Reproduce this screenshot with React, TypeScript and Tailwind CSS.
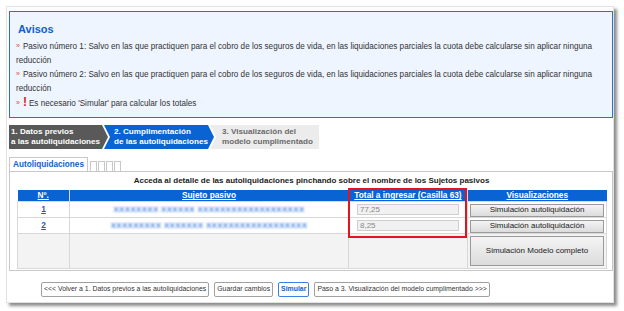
import React from "react";

const font = { fontFamily: '"Liberation Sans", Arial, sans-serif' };

function Bullet() {
  return <span className="inline-block text-[#e0483c] text-[7px] leading-[7px] mr-[3px] align-[1px]">»</span>;
}

const pasivoText =
  "Salvo en las que practiquen para el cobro de los seguros de vida, en las liquidaciones parciales la cuota debe calcularse sin aplicar ninguna";

function Avisos() {
  return (
    <div className="border border-[#2a6fd6] bg-[#eef5ff] pl-[6px] pt-[10px] pb-[6px] text-[8.15px] leading-[14px] text-[#333]">
      <div className="text-[11px] leading-[14px] font-bold text-[#1160c9] pl-[2px] mb-[4px]">Avisos</div>
      {[1, 2].map((n) => (
        <div key={n}>
          <div className="whitespace-nowrap">
            <Bullet />
            <span>Pasivo número {n}: {pasivoText}</span>
          </div>
          <div>reducción</div>
        </div>
      ))}
      <div className="whitespace-nowrap">
        <Bullet />
        <span className="inline-block text-[#e0201c] font-bold text-[12px] leading-[12px] mr-[2px]">!</span>
        <span>Es necesario 'Simular' para calcular los totales</span>
      </div>
    </div>
  );
}

function Steps() {
  return (
    <div className="flex h-[24px] mt-[7px] text-[8.1px] leading-[10px] font-bold">
      <div className="w-[99px] bg-[#595959] text-white pl-[2px] flex flex-col justify-center [clip-path:polygon(0_0,calc(100%_-_6px)_0,100%_50%,calc(100%_-_6px)_100%,0_100%)]">
        <span>1. Datos previos</span>
        <span>a las autoliquidaciones</span>
      </div>
      <div className="w-[110px] -ml-[4px] bg-[#0a63d3] text-white pl-[10px] flex flex-col justify-center [clip-path:polygon(0_0,calc(100%_-_6px)_0,100%_50%,calc(100%_-_6px)_100%,0_100%,6px_50%)]">
        <span>2. Cumplimentación</span>
        <span>de las autoliquidaciones</span>
      </div>
      <div className="w-[109px] -ml-[4px] bg-[#ececec] text-[#6a6a6a] pl-[12px] flex flex-col justify-center [clip-path:polygon(0_0,100%_0,100%_100%,0_100%,6px_50%)]">
        <span>3. Visualización del</span>
        <span>modelo cumplimentado</span>
      </div>
    </div>
  );
}

function Tabs() {
  return (
    <div className="flex items-end mt-[8px] h-[14px]">
      <div className="h-[14px] border border-b-0 border-[#c8c8c8] bg-white px-[3px] text-[8.2px] leading-[13px] font-bold text-[#1160c9]">
        Autoliquidaciones
      </div>
      <div className="flex items-end ml-[2px] gap-[1px]">
        {[0, 1, 2, 3].map((i) => (
          <div key={i} className="w-[7px] h-[10px] border border-b-0 border-[#c8c8c8] bg-white" />
        ))}
      </div>
    </div>
  );
}

function Blurred({ text }: { text: string }) {
  return (
    <span className="text-[#4a86e0] blur-[1px] text-[8px] font-bold tracking-[0.3px] whitespace-nowrap">{text}</span>
  );
}

function SimButton({ label, tall }: { label: string; tall?: boolean }) {
  return (
    <button
      className={
        "w-[134px] border border-[#9a9a9a] bg-gradient-to-b from-[#f4f4f4] to-[#dcdcdc] text-[#222] text-[8px] leading-none " +
        (tall ? "h-[30px]" : "h-[13px]")
      }
    >
      {label}
    </button>
  );
}

function ValueInput({ value }: { value: string }) {
  return (
    <div className="ml-[8px] w-[102px] h-[11px] border border-[#cfcfcf] bg-[#f1f1f1] text-[#888] text-[8px] leading-[9px] pl-[2px]">
      {value}
    </div>
  );
}

function Table() {
  return (
    <div className="relative">
      <table className="w-[589px] table-fixed border-collapse text-[8.3px]">
        <colgroup>
          <col className="w-[52px]" />
          <col className="w-[279px]" />
          <col className="w-[119px]" />
          <col className="w-[139px]" />
        </colgroup>
        <thead>
          <tr className="h-[11px] bg-[#0a63d3] text-white font-bold underline leading-[10px]">
            <th className="border-r border-[#d8d8d8] p-0">Nº.</th>
            <th className="border-r border-[#d8d8d8] p-0">Sujeto pasivo</th>
            <th className="border-r border-[#d8d8d8] p-0">Total a ingresar (Casilla 63)</th>
            <th className="p-0">Visualizaciones</th>
          </tr>
        </thead>
        <tbody>
          <tr className="h-[16px] bg-white">
            <td className="border border-[#d8d8d8] text-center text-[#1160c9] font-bold underline p-0">1</td>
            <td className="border border-[#d8d8d8] text-center p-0">
              <Blurred text="XXXXXXXX XXXXXX XXXXXXXXXXXXXXXXXXX" />
            </td>
            <td className="border border-[#d8d8d8] p-0">
              <ValueInput value="77,25" />
            </td>
            <td className="border border-[#d8d8d8] pl-[2px] p-0 align-bottom">
              <SimButton label="Simulación autoliquidación" />
            </td>
          </tr>
          <tr className="h-[16px] bg-white">
            <td className="border border-[#d8d8d8] text-center text-[#1160c9] font-bold underline p-0">2</td>
            <td className="border border-[#d8d8d8] text-center p-0">
              <Blurred text="XXXXXXXXX XXXXXXX XXXXXXXXXXXXXXXXXX" />
            </td>
            <td className="border border-[#d8d8d8] p-0">
              <ValueInput value="8,25" />
            </td>
            <td className="border border-[#d8d8d8] pl-[2px] p-0 align-bottom">
              <SimButton label="Simulación autoliquidación" />
            </td>
          </tr>
          <tr className="h-[35px] bg-[#f3f3f3]">
            <td className="border border-[#d8d8d8] p-0" />
            <td className="border border-[#d8d8d8] p-0" />
            <td className="border border-[#d8d8d8] p-0" />
            <td className="border border-[#d8d8d8] pl-[2px] p-0 align-middle">
              <SimButton label="Simulación Modelo completo" tall />
            </td>
          </tr>
        </tbody>
      </table>
      <div className="absolute left-[331px] top-[-2px] w-[119px] h-[50px] border-2 border-[#e3141b]" />
    </div>
  );
}

function FooterButton({ label, primary }: { label: string; primary?: boolean }) {
  return (
    <button
      className={
        "h-[15px] px-[2px] rounded-[2px] bg-white text-[6.9px] leading-none border " +
        (primary ? "border-[#3b7fe0] text-[#1160c9] font-bold" : "border-[#a0a0a0] text-[#333]")
      }
    >
      {label}
    </button>
  );
}

export default function App() {
  return (
    <div className="w-[624px] h-[311px] bg-white overflow-hidden pt-[6px] pl-[6px]" style={font}>
      <div className="w-[608px] h-[297px] border border-[#e2e2e2] bg-white pl-[2px] pt-[4px] shadow-[3px_3px_3px_rgba(0,0,0,0.45)]">
        <Avisos />
        <Steps />
        <Tabs />
        <div className="border border-[#c8c8c8] bg-white pl-[7px] pt-[3px] pb-[1px]">
          <div className="text-center text-[8px] leading-[12px] font-bold text-[#222] mb-[3px] w-[589px]">
            Acceda al detalle de las autoliquidaciones pinchando sobre el nombre de los Sujetos pasivos
          </div>
          <Table />
        </div>
        <div className="flex gap-[5px] pl-[32px] mt-[11px]">
          <FooterButton label="<<< Volver a 1. Datos previos a las autoliquidaciones" />
          <FooterButton label="Guardar cambios" />
          <FooterButton label="Simular" primary />
          <FooterButton label="Paso a 3. Visualización del modelo cumplimentado >>>" />
        </div>
      </div>
    </div>
  );
}
